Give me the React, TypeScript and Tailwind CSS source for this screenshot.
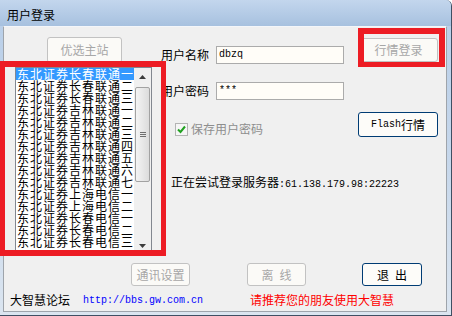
import type { ReactNode } from 'react'
import clsx from 'clsx'

const servers = [
  '东北证券长春联通一',
  '东北证券长春联通二',
  '东北证券长春联通三',
  '东北证券吉林联通一',
  '东北证券吉林联通二',
  '东北证券吉林联通三',
  '东北证券吉林联通四',
  '东北证券吉林联通五',
  '东北证券吉林联通六',
  '东北证券吉林联通七',
  '东北证券上海电信一',
  '东北证券上海电信二',
  '东北证券长春电信一',
  '东北证券长春电信二',
  '东北证券长春电信三',
]

function Btn({
  children,
  disabled,
  className,
}: {
  children: ReactNode
  disabled?: boolean
  className?: string
}) {
  return (
    <button
      type="button"
      disabled={disabled}
      className={clsx(
        'flex shrink-0 items-center justify-center rounded-[3px] border text-[12px] leading-none',
        disabled
          ? 'border-[#c2c2c2] bg-[#fbfaf7] text-[#a7a7a7]'
          : 'border-[#003c74] bg-[#fdfcf9] text-black',
        className
      )}
    >
      {children}
    </button>
  )
}

function Field({ label, value }: { label: string; value: string }) {
  return (
    <div className="flex items-center">
      <span className="w-[55px] text-[12px] leading-[14px] text-black">{label}</span>
      <div className="flex h-[18px] w-[128px] items-center border border-[#ababab] bg-[#fffdf8] pl-[2px]">
        <span className="font-['Liberation_Mono',monospace] text-[10px] leading-none text-black">
          {value}
        </span>
      </div>
    </div>
  )
}

function Mono({ children }: { children: ReactNode }) {
  return <span className="font-['Liberation_Mono',monospace] text-[10px]">{children}</span>
}

function ServerList() {
  return (
    <div className="flex h-[188px] w-[137px] border border-[#828790] bg-white">
      <div className="flex-1 overflow-hidden">
        {servers.map((name, i) => (
          <div
            key={name}
            className={clsx(
              'h-[12px] whitespace-nowrap pl-[1px] text-[12px] leading-[12px] tracking-[1px]',
              i === 0 ? 'bg-[#3399ff] text-white' : 'text-black'
            )}
          >
            {name}
          </div>
        ))}
      </div>
      <div className="flex w-[17px] flex-col bg-[#f0f0f0]">
        <div className="flex h-[17px] items-center justify-center">
          <svg width="7" height="4" viewBox="0 0 7 4">
            <path d="M3.5 0L7 4H0z" fill="#3c3c3c" />
          </svg>
        </div>
        <div className="mx-[1px] mt-[2px] flex h-[95px] flex-col items-center justify-center gap-[1px] rounded-[2px] border border-[#a2a2a2] bg-gradient-to-r from-[#f4f4f4] to-[#dcdcdc]">
          <div className="h-px w-[6px] bg-[#6f6f6f]" />
          <div className="h-px w-[6px] bg-[#6f6f6f]" />
          <div className="h-px w-[6px] bg-[#6f6f6f]" />
        </div>
        <div className="flex-1" />
        <div className="flex h-[17px] items-center justify-center">
          <svg width="7" height="4" viewBox="0 0 7 4">
            <path d="M0 0H7L3.5 4z" fill="#3c3c3c" />
          </svg>
        </div>
      </div>
    </div>
  )
}

export default function App() {
  return (
    <div className="relative h-[316px] w-[452px] overflow-hidden rounded-tr-[6px] border-r border-b border-[#3f4f63] bg-gradient-to-b from-[#b8cee8] via-[#c6d7eb] to-[#dbe5f0] font-['Noto_Sans_CJK_SC',sans-serif]">
      {/* title bar */}
      <div className="flex h-[26px] items-center bg-gradient-to-b from-[#c3d6ed] to-[#a7c1df] pl-[7px] pt-[3px] text-[12px] text-black">
        用户登录
      </div>

      {/* client area */}
      <div className="ml-[3px] h-[286px] w-[444px] border-x border-b border-t border-[#9ea4ab] border-t-[#f4f6f9] bg-[#f0f0f0]">
        <div className="flex items-start pt-[10px]">
          <div className="ml-[11px] flex w-[137px] flex-col">
            <Btn disabled className="ml-[32px] h-[26px] w-[75px]">
              优选主站
            </Btn>
            <div className="mt-[4px]">
              <ServerList />
            </div>
          </div>

          <div className="ml-[9px] flex w-[277px] flex-col">
            <div className="flex items-start">
              <div className="mt-[9px]">
                <Field label="用户名称" value="dbzq" />
              </div>
              <Btn disabled className="ml-[15px] mt-[1px] h-[24px] w-[79px]">
                行情登录
              </Btn>
            </div>
            <div className="mt-[18px]">
              <Field label="用户密码" value="***" />
            </div>
            <div className="mt-[12px] flex items-start">
              <div className="ml-[14px] mt-[10px] flex items-center">
                <div className="flex h-[13px] w-[13px] items-center justify-center border border-[#b4b4b4] bg-[#f6f6f6]">
                  <svg width="9" height="9" viewBox="0 0 9 9">
                    <path d="M1 4.5L3.5 7L8 1.5" fill="none" stroke="#21a121" strokeWidth="2" />
                  </svg>
                </div>
                <span className="ml-[3px] text-[12px] leading-[14px] text-[#8e8e8e]">保存用户密码</span>
              </div>
              <Btn className="ml-auto h-[25px] w-[80px]">
                <Mono>Flash</Mono>
                <span>行情</span>
              </Btn>
            </div>
            <div className="ml-[10px] mt-[38px] whitespace-nowrap text-[12px] leading-[14px] text-black">
              正在尝试登录服务器<Mono>:61.138.179.98:22223</Mono>
            </div>
          </div>
        </div>

        <div className="mt-[8px] flex">
          <Btn disabled className="ml-[127px] h-[23px] w-[59px]">
            通讯设置
          </Btn>
          <Btn disabled className="ml-[57px] h-[23px] w-[59px]">
            离<span className="inline-block w-[6px]" />线
          </Btn>
          <Btn className="ml-[56px] h-[23px] w-[60px]">
            退<span className="inline-block w-[6px]" />出
          </Btn>
        </div>

        <div className="mt-[5px] flex items-center whitespace-nowrap text-[12px] leading-[14px]">
          <span className="ml-[6px] text-black">大智慧论坛</span>
          <span className="ml-[13px] text-[#0000ff]">
            <Mono>http://bbs.gw.com.cn</Mono>
          </span>
          <span className="ml-[47px] text-[#ff0000]">请推荐您的朋友使用大智慧</span>
        </div>
      </div>

      {/* red annotation boxes */}
      <div className="pointer-events-none absolute left-0 top-[61px] h-[195px] w-[166px] border-[6px] border-l-[5px] border-r-[5px] border-[#ed1c24]" />
      <div className="pointer-events-none absolute left-[358px] top-[28px] h-[39px] w-[87px] border-[6px] border-b-[5px] border-[#ed1c24]" />
    </div>
  )
}
